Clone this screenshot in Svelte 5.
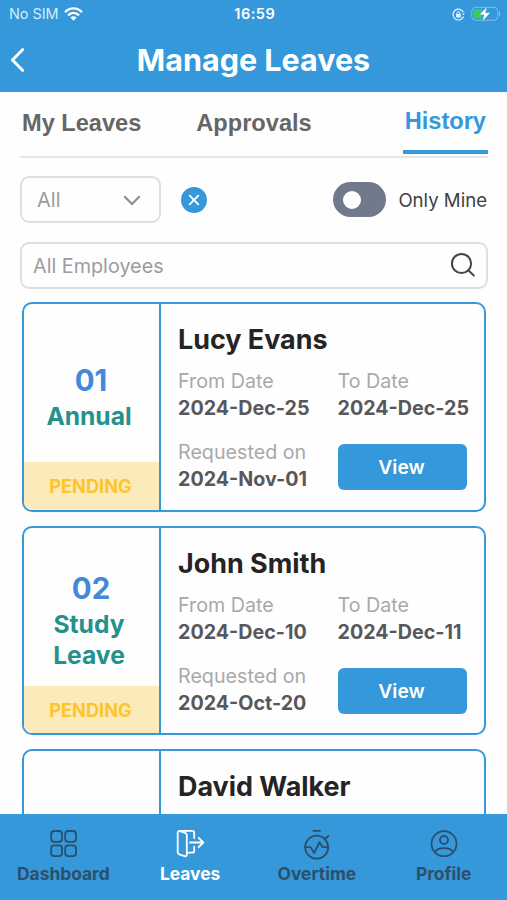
<script lang="ts">
  interface Leave {
    name: string;
    type: string;
    days: string;
    from: string;
    to: string;
    requested: string;
    status: string;
  }

  const tabs = ["My Leaves", "Approvals", "History"];
  const navItems = ["Dashboard", "Leaves", "Overtime", "Profile"];

  const leaves: Leave[] = [
    {
      name: "Lucy Evans",
      type: "Annual",
      days: "01",
      from: "2024-Dec-25",
      to: "2024-Dec-25",
      requested: "2024-Nov-01",
      status: "PENDING",
    },
    {
      name: "John Smith",
      type: "Study Leave",
      days: "02",
      from: "2024-Dec-10",
      to: "2024-Dec-11",
      requested: "2024-Oct-20",
      status: "PENDING",
    },
    { name: "David Walker", type: "", days: "", from: "", to: "", requested: "", status: "" },
  ];

  let activeTab = $state("History");
  let activeNav = $state("Leaves");
  let onlyMine = $state(false);
</script>

<div class="screen">
  <header class="header">
    <div class="status">
      <div class="status__left">
        <span class="status__sim">No SIM</span>
        <svg width="19" height="14" viewBox="0 0 19 14" fill="none" stroke="#fff" stroke-width="2.3">
          <path d="M1 5.2C6 .2 13 .2 18 5.2" />
          <path d="M4 8.4c3.3-3.2 7.7-3.2 11 0" />
          <path d="M6.5 10.5c1.7-1.7 4.3-1.7 6 0L9.5 13.7z" fill="#fff" stroke="none" />
        </svg>
      </div>
      <span class="status__time">16:59</span>
      <div class="status__right">
        <svg width="13" height="13" viewBox="0 0 13 13" fill="none" stroke="#e5f2fb" stroke-width="1.2">
          <path d="M11.3 4.2A5.4 5.4 0 1 0 11.5 8.5" />
          <path d="M12.8 5.2l-1.2 2-1.7-1.5z" fill="#e5f2fb" stroke="none" />
          <rect x="4" y="5.8" width="4.8" height="3.6" rx=".6" fill="#e5f2fb" stroke="none" />
          <path d="M5.1 6V4.8a1.3 1.3 0 0 1 2.6 0V6" stroke-width=".9" />
        </svg>
        <svg width="30" height="16" viewBox="0 0 30 16">
          <rect x=".8" y="1.3" width="26" height="13" rx="3.8" fill="none" stroke="#82bde9" />
          <path d="M28 5.5c1.8.6 1.8 4.2 0 4.8z" fill="#82bde9" />
          <path d="M4.8 3H11v9.6H4.8A2.3 2.3 0 0 1 2.5 10.3v-5A2.3 2.3 0 0 1 4.8 3z" fill="#32ce62" />
          <path d="M16.2.6L8.5 8.8h4.5L11.4 15.3l8-8.5h-4.9z" fill="#fff" stroke="#3498db" stroke-width=".4" />
        </svg>
      </div>
    </div>
    <div class="titlebar">
      <button class="back" aria-label="Back">
        <svg width="15" height="24" viewBox="0 0 15 24" fill="none" stroke="#fff" stroke-width="3" stroke-linecap="round" stroke-linejoin="round">
          <path d="M12.5 1.7L2.5 12l10 10.3" />
        </svg>
      </button>
      <h1 class="title">Manage Leaves</h1>
    </div>
  </header>

  <main class="content">
    <nav class="tabs">
      {#each tabs as tab}
        <button class="tab" class:tab--active={activeTab === tab} onclick={() => (activeTab = tab)}>
          {tab}
        </button>
      {/each}
    </nav>

    <div class="filters">
      <button class="select">
        All
        <svg width="18" height="11" viewBox="0 0 18 11" fill="none" stroke="#8d8e90" stroke-width="2.2" stroke-linecap="round" stroke-linejoin="round">
          <path d="M2 2l7 7 7-7" />
        </svg>
      </button>
      <button class="clear" aria-label="Clear filter">
        <svg width="12" height="12" viewBox="0 0 12 12" stroke="#fff" stroke-width="1.9" stroke-linecap="round">
          <path d="M1.7 1.7l8.6 8.6M10.3 1.7l-8.6 8.6" />
        </svg>
      </button>
      <button
        class="toggle"
        class:toggle--on={onlyMine}
        aria-label="Only Mine"
        onclick={() => (onlyMine = !onlyMine)}
      >
        <span class="toggle__knob"></span>
      </button>
      <span class="toggle-label">Only Mine</span>
    </div>

    <div class="search">
      <span>All Employees</span>
      <svg class="search__icon" width="26" height="26" viewBox="0 0 26 26" fill="none" stroke="#454545" stroke-width="2" stroke-linecap="round">
        <circle cx="11.5" cy="11.5" r="9.6" />
        <path d="M18.5 18.5l5.3 5" />
      </svg>
    </div>

    <div class="list">
      {#each leaves as leave}
        <article class="card">
          <div class="card__side">
            <div class="card__kind">
              <span class="card__days">{leave.days}</span>
              <span class="card__type">{leave.type}</span>
            </div>
            <div class="card__status">{leave.status}</div>
          </div>
          <div class="card__body">
            <h2 class="card__name">{leave.name}</h2>
            {#if leave.from}
              <div class="card__grid">
                <div class="field">
                  <span class="field__label">From Date</span>
                  <span class="field__value">{leave.from}</span>
                </div>
                <div class="field">
                  <span class="field__label">To Date</span>
                  <span class="field__value">{leave.to}</span>
                </div>
                <div class="field">
                  <span class="field__label">Requested on</span>
                  <span class="field__value">{leave.requested}</span>
                </div>
                <button class="view">View</button>
              </div>
            {/if}
          </div>
        </article>
      {/each}
    </div>
  </main>

  <nav class="bottom">
    {#each navItems as item}
      <button class="nav" class:nav--active={activeNav === item} onclick={() => (activeNav = item)}>
        <svg width="32" height="32" viewBox="0 0 32 32" fill="none" stroke="currentColor" stroke-width="1.8" stroke-linecap="round" stroke-linejoin="round">
          {#if item === "Dashboard"}
            <rect x="4.2" y="3" width="10.8" height="10.8" rx="3" />
            <rect x="18.2" y="3" width="10.8" height="10.8" rx="3" />
            <rect x="4.2" y="17.3" width="10.8" height="10.8" rx="3" />
            <rect x="18.2" y="17.3" width="10.8" height="10.8" rx="3" />
          {:else if item === "Leaves"}
            <path d="M5.3 2.9l5.8 1.9q1.7.6 1.7 2.4v19.3q0 2.3-2.1 1.7l-5-1.5q-2-.6-2-2.6V4.9q0-2 2-2h12.5q2 0 2 2v5.2" />
            <path d="M13 24.700h5.200q2 0 2-2v-4M16 14.500h13.200M24.700 9.800l4.600 4.700-4.600 4.700" />
          {:else if item === "Overtime"}
            <circle cx="15.700" cy="19.200" r="11.500" />
            <path d="M12.500 2.800h6.500M23.500 11.300l4-3.300M4.200 19.200h5.300l3.700 5.800 5.300-11 3 5.200h5.700" />
          {:else}
            <circle cx="16" cy="15.700" r="12.500" />
            <circle cx="16" cy="12" r="4" />
            <path d="M7 24.500c2-5.800 16-5.800 18 0" />
          {/if}
        </svg>
        <span>{item}</span>
      </button>
    {/each}
  </nav>
</div>

<style>
  :global(body) {
    background: #fefefe;
  }
  .screen {
    display: flex;
    flex-direction: column;
    width: 507px;
    height: 900px;
    overflow: hidden;
    font-family: Inter, "Liberation Sans", sans-serif;
    background: #fefefe;
  }
  button {
    margin: 0;
    padding: 0;
    border: 0;
    background: none;
    font: inherit;
    color: inherit;
  }
  svg {
    display: block;
    flex: none;
  }

  .header {
    flex: none;
    height: 92px;
    background: #3498db;
    color: #fff;
  }
  .status {
    display: grid;
    grid-template-columns: 1fr auto 1fr;
    align-items: center;
    height: 28px;
    padding: 0 6.5px 0 9px;
  }
  .status__left,
  .status__right {
    display: flex;
    align-items: center;
    gap: 6px;
  }
  .status__left {
    gap: 5.5px;
    padding-bottom: 1px;
  }
  .status__right {
    justify-content: flex-end;
  }
  .status__sim {
    font-size: 14.4px;
    color: #d9ebf9;
  }
  .status__time {
    font-size: 14.5px;
    font-weight: 600;
    letter-spacing: 0.5px;
    padding-bottom: 1px;
  }
  .titlebar {
    display: grid;
    grid-template-columns: 30px 1fr 30px;
    align-items: center;
    height: 64px;
    padding: 0 10px;
  }
  .back {
    padding-bottom: 1px;
  }
  .title {
    margin: 0;
    font-size: 30.5px;
    line-height: 36px;
    font-weight: 700;
    text-align: center;
    white-space: nowrap;
  }

  .content {
    flex: 1;
    min-height: 0;
    overflow: hidden;
    padding: 0 19px 0 20px;
  }
  .tabs {
    display: grid;
    grid-template-columns: 1fr auto 1fr;
    height: 64px;
    border-bottom: 2px solid #e5e6e8;
  }
  .tab {
    height: 62px;
    padding: 0 2px;
    font-family: "Liberation Sans", Arial, sans-serif;
    font-size: 23.6px;
    font-weight: 700;
    color: #666;
  }
  .tab:first-child {
    justify-self: start;
  }
  .tab:last-child {
    justify-self: end;
  }
  .tab--active {
    border-bottom: 4px solid #3498db;
    color: #3498db;
  }

  .filters {
    display: flex;
    align-items: center;
    margin-top: 18px;
    height: 47px;
  }
  .select {
    display: flex;
    align-items: center;
    justify-content: space-between;
    box-sizing: border-box;
    width: 141px;
    height: 47px;
    padding: 1px 18px 0 15px;
    border: 2px solid #dddfe0;
    border-radius: 9px;
    font-size: 20px;
    color: #9b9ca0;
  }
  .clear {
    display: grid;
    place-items: center;
    width: 26px;
    height: 26px;
    margin-left: 20px;
    border-radius: 50%;
    background: #3498db;
  }
  .toggle {
    display: flex;
    align-items: center;
    width: 53px;
    height: 35px;
    margin-left: auto;
    padding: 0 10px;
    box-sizing: border-box;
    border-radius: 18px;
    background: #717a8a;
  }
  .toggle--on {
    justify-content: flex-end;
    background: #3498db;
  }
  .toggle__knob {
    width: 18px;
    height: 18px;
    border-radius: 50%;
    background: #fff;
  }
  .toggle-label {
    margin-left: 12px;
    padding: 0 1px 0 0;
    font-size: 18.6px;
    color: #3f3f3f;
  }

  .search {
    display: flex;
    align-items: center;
    justify-content: space-between;
    box-sizing: border-box;
    height: 47px;
    margin-top: 19px;
    padding: 0 10px 0 11px;
    border: 2px solid #dddfe0;
    border-radius: 9px;
    font-size: 19.8px;
    color: #9b9ca0;
  }
  .search__icon {
    margin-bottom: 2px;
  }

  .list {
    display: flex;
    flex-direction: column;
    gap: 14px;
    margin: 13px 0 0 1.5px;
    width: 464.5px;
  }
  .card {
    display: flex;
    box-sizing: border-box;
    height: 209.5px;
    border: 2.5px solid #3498db;
    border-radius: 10px;
    overflow: hidden;
  }
  .card__side {
    display: flex;
    flex-direction: column;
    box-sizing: border-box;
    flex: none;
    width: 137px;
    border-right: 2.5px solid #3498db;
    text-align: center;
  }
  .card__kind {
    flex: 1;
    display: flex;
    flex-direction: column;
    align-items: center;
    justify-content: flex-end;
    padding: 0 20px 15px 16px;
  }
  .card:first-child .card__kind {
    padding-bottom: 30px;
  }
  .card__days {
    padding-left: 4px;
    font-size: 29.5px;
    line-height: 41px;
    font-weight: 700;
    color: #4489d8;
  }
  .card__type {
    font-size: 24.6px;
    line-height: 31px;
    font-weight: 700;
    color: #24918a;
  }
  .card__status {
    height: 47.5px;
    padding-right: 1px;
    font-size: 18.2px;
    line-height: 48px;
    font-weight: 700;
    color: #fdc42b;
    background: #fdeaba;
  }
  .card__body {
    flex: 1;
    padding: 17px 0 0 17.5px;
  }
  .card__name {
    margin: 0;
    font-size: 26.9px;
    line-height: 36px;
    font-weight: 700;
    color: #242424;
  }
  .card__grid {
    display: grid;
    grid-template-columns: 159.5px 129px;
    row-gap: 17px;
    margin-top: 11px;
  }
  .field {
    display: flex;
    flex-direction: column;
  }
  .field__label {
    font-size: 19.7px;
    line-height: 27px;
    color: #a9a9ab;
    white-space: nowrap;
  }
  .field__value {
    font-size: 19.7px;
    line-height: 27px;
    font-weight: 700;
    color: #58585a;
    white-space: nowrap;
  }
  .view {
    height: 46px;
    margin-top: 5px;
    padding-right: 1px;
    border-radius: 6px;
    background: #3498db;
    color: #fff;
    font-size: 19.3px;
    font-weight: 600;
  }

  .bottom {
    display: grid;
    grid-template-columns: repeat(4, 1fr);
    flex: none;
    height: 86px;
    background: #3498db;
  }
  .nav {
    display: flex;
    flex-direction: column;
    align-items: center;
    gap: 2px;
    padding-top: 14px;
    color: #2c4f6b;
    font-size: 17.4px;
    line-height: 24px;
    font-weight: 700;
  }
  .nav--active {
    color: #fff;
  }
</style>
